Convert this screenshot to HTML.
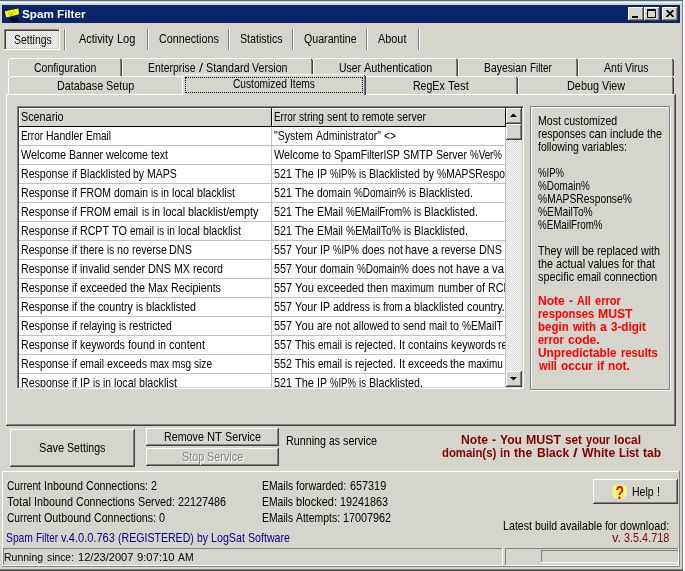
<!DOCTYPE html>
<html><head><meta charset="utf-8"><title>Spam Filter</title>
<style>
html,body{margin:0;padding:0}
body{width:685px;height:571px;position:relative;overflow:hidden;background:#d6d5cd;font-family:"Liberation Sans",sans-serif;font-size:13px;line-height:13px;color:#000}
i{position:absolute;display:block}
span{position:absolute;top:0;display:block;white-space:pre;transform-origin:0 0;height:13px;line-height:13px}
b{position:absolute;display:block;font-weight:normal;height:13px}
b.c{overflow:hidden}
#w{position:absolute;left:0;top:0;width:685px;height:571px;will-change:transform}
</style></head><body><div id="w">
<i style="left:0px;top:0px;width:683px;height:1px;background:#3a6ea5;"></i>
<i style="left:0px;top:2px;width:682px;height:1px;background:#ffffff;"></i>
<i style="left:682px;top:1px;width:1px;height:570px;background:#808080;"></i>
<i style="left:683px;top:0px;width:2px;height:571px;background:#ffffff;"></i>
<i style="left:0px;top:569px;width:683px;height:1px;background:#808080;"></i>
<i style="left:0px;top:570px;width:683px;height:1px;background:#404040;"></i>
<i style="left:2px;top:5px;width:678px;height:18px;background:#0a246a;"></i>
<svg style="position:absolute;left:2px;top:4px" width="24" height="20" viewBox="2 4 24 20">
<polygon points="4.8,11.2 18.4,8.4 19,14.3 6.3,17.4" fill="#ffff00"/>
<path d="M8 13.5 L10.5 12.2 L12 13.6 L14 11.4 L16 12.6 M9.5 15.2 L13.5 14.4" stroke="#9a9a00" stroke-width="0.9" fill="none"/>
<path d="M10.5 19 q1 -1.5 2 0 t2 0 t2 0 t2 0 M10.5 21 q1 -1.5 2 0 t2 0 t2 0 t2 0" stroke="#000" stroke-width="1.5" fill="none"/>
</svg>
<i style="left:628px;top:7px;width:16px;height:14px;background:#d6d5cd;"></i>
<i style="left:628px;top:7px;width:15px;height:1px;background:#ffffff;"></i>
<i style="left:628px;top:7px;width:1px;height:13px;background:#ffffff;"></i>
<i style="left:628px;top:20px;width:16px;height:1px;background:#404040;"></i>
<i style="left:643px;top:7px;width:1px;height:14px;background:#404040;"></i>
<i style="left:629px;top:19px;width:14px;height:1px;background:#808080;"></i>
<i style="left:642px;top:8px;width:1px;height:12px;background:#808080;"></i>
<i style="left:644px;top:7px;width:16px;height:14px;background:#d6d5cd;"></i>
<i style="left:644px;top:7px;width:15px;height:1px;background:#ffffff;"></i>
<i style="left:644px;top:7px;width:1px;height:13px;background:#ffffff;"></i>
<i style="left:644px;top:20px;width:16px;height:1px;background:#404040;"></i>
<i style="left:659px;top:7px;width:1px;height:14px;background:#404040;"></i>
<i style="left:645px;top:19px;width:14px;height:1px;background:#808080;"></i>
<i style="left:658px;top:8px;width:1px;height:12px;background:#808080;"></i>
<i style="left:662px;top:7px;width:16px;height:14px;background:#d6d5cd;"></i>
<i style="left:662px;top:7px;width:15px;height:1px;background:#ffffff;"></i>
<i style="left:662px;top:7px;width:1px;height:13px;background:#ffffff;"></i>
<i style="left:662px;top:20px;width:16px;height:1px;background:#404040;"></i>
<i style="left:677px;top:7px;width:1px;height:14px;background:#404040;"></i>
<i style="left:663px;top:19px;width:14px;height:1px;background:#808080;"></i>
<i style="left:676px;top:8px;width:1px;height:12px;background:#808080;"></i>
<i style="left:632px;top:16px;width:6px;height:2px;background:#000;"></i>
<i style="left:647px;top:9px;width:9px;height:2px;background:#000;"></i>
<i style="left:647px;top:9px;width:1px;height:9px;background:#000;"></i>
<i style="left:655px;top:9px;width:1px;height:9px;background:#000;"></i>
<i style="left:647px;top:17px;width:9px;height:1px;background:#000;"></i>
<svg style="position:absolute;left:666px;top:10px" width="8" height="7" viewBox="0 0 8 7"><path d="M0.5 0 L7.5 7 M7.5 0 L0.5 7" stroke="#000" stroke-width="1.7" fill="none"/></svg>
<i style="left:6px;top:31px;width:52px;height:17px;background:;background:repeating-conic-gradient(#ffffff 0% 25%, #d6d5cd 0% 50%) 0 0/2px 2px;"></i>
<i style="left:4px;top:29px;width:56px;height:1px;background:#808080;"></i>
<i style="left:4px;top:29px;width:1px;height:21px;background:#808080;"></i>
<i style="left:5px;top:30px;width:54px;height:1px;background:#404040;"></i>
<i style="left:5px;top:30px;width:1px;height:19px;background:#404040;"></i>
<i style="left:4px;top:49px;width:56px;height:1px;background:#ffffff;"></i>
<i style="left:59px;top:29px;width:1px;height:21px;background:#ffffff;"></i>
<i style="left:64px;top:29px;width:1px;height:21px;background:#808080;"></i>
<i style="left:65px;top:29px;width:1px;height:21px;background:#ffffff;"></i>
<i style="left:147px;top:29px;width:1px;height:21px;background:#808080;"></i>
<i style="left:148px;top:29px;width:1px;height:21px;background:#ffffff;"></i>
<i style="left:228px;top:29px;width:1px;height:21px;background:#808080;"></i>
<i style="left:229px;top:29px;width:1px;height:21px;background:#ffffff;"></i>
<i style="left:292px;top:29px;width:1px;height:21px;background:#808080;"></i>
<i style="left:293px;top:29px;width:1px;height:21px;background:#ffffff;"></i>
<i style="left:366px;top:29px;width:1px;height:21px;background:#808080;"></i>
<i style="left:367px;top:29px;width:1px;height:21px;background:#ffffff;"></i>
<i style="left:418px;top:29px;width:1px;height:21px;background:#808080;"></i>
<i style="left:419px;top:29px;width:1px;height:21px;background:#ffffff;"></i>
<i style="left:8px;top:60px;width:1px;height:16px;background:#ffffff;"></i>
<i style="left:9px;top:59px;width:1px;height:1px;background:#ffffff;"></i>
<i style="left:10px;top:58px;width:110px;height:1px;background:#ffffff;"></i>
<i style="left:120px;top:60px;width:1px;height:16px;background:#808080;"></i>
<i style="left:121px;top:60px;width:1px;height:16px;background:#404040;"></i>
<i style="left:120px;top:59px;width:1px;height:1px;background:#404040;"></i>
<i style="left:122px;top:60px;width:1px;height:16px;background:#ffffff;"></i>
<i style="left:123px;top:59px;width:1px;height:1px;background:#ffffff;"></i>
<i style="left:124px;top:58px;width:187px;height:1px;background:#ffffff;"></i>
<i style="left:311px;top:60px;width:1px;height:16px;background:#808080;"></i>
<i style="left:312px;top:60px;width:1px;height:16px;background:#404040;"></i>
<i style="left:311px;top:59px;width:1px;height:1px;background:#404040;"></i>
<i style="left:313px;top:60px;width:1px;height:16px;background:#ffffff;"></i>
<i style="left:314px;top:59px;width:1px;height:1px;background:#ffffff;"></i>
<i style="left:315px;top:58px;width:141px;height:1px;background:#ffffff;"></i>
<i style="left:456px;top:60px;width:1px;height:16px;background:#808080;"></i>
<i style="left:457px;top:60px;width:1px;height:16px;background:#404040;"></i>
<i style="left:456px;top:59px;width:1px;height:1px;background:#404040;"></i>
<i style="left:458px;top:60px;width:1px;height:16px;background:#ffffff;"></i>
<i style="left:459px;top:59px;width:1px;height:1px;background:#ffffff;"></i>
<i style="left:460px;top:58px;width:116px;height:1px;background:#ffffff;"></i>
<i style="left:576px;top:60px;width:1px;height:16px;background:#808080;"></i>
<i style="left:577px;top:60px;width:1px;height:16px;background:#404040;"></i>
<i style="left:576px;top:59px;width:1px;height:1px;background:#404040;"></i>
<i style="left:578px;top:60px;width:1px;height:16px;background:#ffffff;"></i>
<i style="left:579px;top:59px;width:1px;height:1px;background:#ffffff;"></i>
<i style="left:580px;top:58px;width:92px;height:1px;background:#ffffff;"></i>
<i style="left:672px;top:60px;width:1px;height:16px;background:#808080;"></i>
<i style="left:673px;top:60px;width:1px;height:16px;background:#404040;"></i>
<i style="left:672px;top:59px;width:1px;height:1px;background:#404040;"></i>
<i style="left:8px;top:78px;width:1px;height:16px;background:#ffffff;"></i>
<i style="left:9px;top:77px;width:1px;height:1px;background:#ffffff;"></i>
<i style="left:10px;top:76px;width:172px;height:1px;background:#ffffff;"></i>
<i style="left:366px;top:76px;width:150px;height:1px;background:#ffffff;"></i>
<i style="left:516px;top:78px;width:1px;height:16px;background:#808080;"></i>
<i style="left:517px;top:78px;width:1px;height:16px;background:#404040;"></i>
<i style="left:516px;top:77px;width:1px;height:1px;background:#404040;"></i>
<i style="left:518px;top:78px;width:1px;height:16px;background:#ffffff;"></i>
<i style="left:519px;top:77px;width:1px;height:1px;background:#ffffff;"></i>
<i style="left:520px;top:76px;width:152px;height:1px;background:#ffffff;"></i>
<i style="left:672px;top:78px;width:1px;height:16px;background:#808080;"></i>
<i style="left:673px;top:78px;width:1px;height:16px;background:#404040;"></i>
<i style="left:672px;top:77px;width:1px;height:1px;background:#404040;"></i>
<i style="left:6px;top:94px;width:669px;height:1px;background:#ffffff;"></i>
<i style="left:6px;top:94px;width:1px;height:331px;background:#ffffff;"></i>
<i style="left:674px;top:95px;width:1px;height:330px;background:#808080;"></i>
<i style="left:675px;top:94px;width:1px;height:332px;background:#404040;"></i>
<i style="left:7px;top:424px;width:668px;height:1px;background:#808080;"></i>
<i style="left:6px;top:425px;width:670px;height:1px;background:#404040;"></i>
<i style="left:182px;top:74px;width:184px;height:21px;background:#d6d5cd;"></i>
<i style="left:182px;top:76px;width:1px;height:19px;background:#ffffff;"></i>
<i style="left:183px;top:75px;width:1px;height:1px;background:#ffffff;"></i>
<i style="left:184px;top:74px;width:180px;height:1px;background:#ffffff;"></i>
<i style="left:364px;top:76px;width:1px;height:19px;background:#808080;"></i>
<i style="left:365px;top:76px;width:1px;height:19px;background:#404040;"></i>
<i style="left:364px;top:75px;width:1px;height:1px;background:#404040;"></i>
<i style="left:185px;top:77px;width:176px;height:14px;border:1px dotted #000;background:none"></i>
<i style="left:17px;top:106px;width:507px;height:1px;background:#808080;"></i>
<i style="left:17px;top:106px;width:1px;height:283px;background:#808080;"></i>
<i style="left:18px;top:107px;width:505px;height:1px;background:#404040;"></i>
<i style="left:18px;top:107px;width:1px;height:281px;background:#404040;"></i>
<i style="left:17px;top:388px;width:507px;height:1px;background:#ffffff;"></i>
<i style="left:523px;top:106px;width:1px;height:283px;background:#ffffff;"></i>
<i style="left:19px;top:127px;width:487px;height:260px;background:#ffffff;"></i>
<i style="left:19px;top:108px;width:487px;height:1px;background:#ffffff;"></i>
<i style="left:19px;top:108px;width:1px;height:18px;background:#ffffff;"></i>
<i style="left:272px;top:108px;width:1px;height:18px;background:#ffffff;"></i>
<i style="left:271px;top:108px;width:1px;height:19px;background:#000;"></i>
<i style="left:505px;top:108px;width:1px;height:19px;background:#000;"></i>
<i style="left:19px;top:126px;width:487px;height:1px;background:#000;"></i>
<i style="left:19px;top:145px;width:487px;height:1px;background:#c0c0c0;"></i>
<i style="left:19px;top:164px;width:487px;height:1px;background:#c0c0c0;"></i>
<i style="left:19px;top:183px;width:487px;height:1px;background:#c0c0c0;"></i>
<i style="left:19px;top:202px;width:487px;height:1px;background:#c0c0c0;"></i>
<i style="left:19px;top:221px;width:487px;height:1px;background:#c0c0c0;"></i>
<i style="left:19px;top:240px;width:487px;height:1px;background:#c0c0c0;"></i>
<i style="left:19px;top:259px;width:487px;height:1px;background:#c0c0c0;"></i>
<i style="left:19px;top:278px;width:487px;height:1px;background:#c0c0c0;"></i>
<i style="left:19px;top:297px;width:487px;height:1px;background:#c0c0c0;"></i>
<i style="left:19px;top:316px;width:487px;height:1px;background:#c0c0c0;"></i>
<i style="left:19px;top:335px;width:487px;height:1px;background:#c0c0c0;"></i>
<i style="left:19px;top:354px;width:487px;height:1px;background:#c0c0c0;"></i>
<i style="left:19px;top:373px;width:487px;height:1px;background:#c0c0c0;"></i>
<i style="left:271px;top:127px;width:1px;height:260px;background:#c0c0c0;"></i>
<i style="left:505px;top:127px;width:1px;height:260px;background:#c0c0c0;"></i>
<i style="left:506px;top:108px;width:16px;height:279px;background:;background:repeating-conic-gradient(#ffffff 0% 25%, #d6d5cd 0% 50%) 0 0/2px 2px;"></i>
<i style="left:506px;top:108px;width:16px;height:16px;background:#d6d5cd;"></i>
<i style="left:506px;top:108px;width:15px;height:1px;background:#ffffff;"></i>
<i style="left:506px;top:108px;width:1px;height:15px;background:#ffffff;"></i>
<i style="left:506px;top:123px;width:16px;height:1px;background:#404040;"></i>
<i style="left:521px;top:108px;width:1px;height:16px;background:#404040;"></i>
<i style="left:507px;top:122px;width:14px;height:1px;background:#808080;"></i>
<i style="left:520px;top:109px;width:1px;height:14px;background:#808080;"></i>
<i style="left:506px;top:124px;width:16px;height:16px;background:#d6d5cd;"></i>
<i style="left:506px;top:124px;width:15px;height:1px;background:#ffffff;"></i>
<i style="left:506px;top:124px;width:1px;height:15px;background:#ffffff;"></i>
<i style="left:506px;top:139px;width:16px;height:1px;background:#404040;"></i>
<i style="left:521px;top:124px;width:1px;height:16px;background:#404040;"></i>
<i style="left:507px;top:138px;width:14px;height:1px;background:#808080;"></i>
<i style="left:520px;top:125px;width:1px;height:14px;background:#808080;"></i>
<i style="left:506px;top:371px;width:16px;height:16px;background:#d6d5cd;"></i>
<i style="left:506px;top:371px;width:15px;height:1px;background:#ffffff;"></i>
<i style="left:506px;top:371px;width:1px;height:15px;background:#ffffff;"></i>
<i style="left:506px;top:386px;width:16px;height:1px;background:#404040;"></i>
<i style="left:521px;top:371px;width:1px;height:16px;background:#404040;"></i>
<i style="left:507px;top:385px;width:14px;height:1px;background:#808080;"></i>
<i style="left:520px;top:372px;width:1px;height:14px;background:#808080;"></i>
<svg style="position:absolute;left:510px;top:113px" width="7" height="4" viewBox="0 0 7 4"><polygon points="0,4 3.5,0.5 7,4" fill="#000"/></svg>
<svg style="position:absolute;left:510px;top:377px" width="7" height="4" viewBox="0 0 7 4"><polygon points="0,0 7,0 3.5,3.5" fill="#000"/></svg>
<i style="left:530px;top:390px;width:141px;height:1px;background:#ffffff;"></i>
<i style="left:670px;top:106px;width:1px;height:285px;background:#ffffff;"></i>
<i style="left:530px;top:106px;width:140px;height:1px;background:#808080;"></i>
<i style="left:530px;top:106px;width:1px;height:284px;background:#808080;"></i>
<i style="left:531px;top:107px;width:138px;height:1px;background:#ffffff;"></i>
<i style="left:531px;top:107px;width:1px;height:282px;background:#ffffff;"></i>
<i style="left:531px;top:389px;width:139px;height:1px;background:#808080;"></i>
<i style="left:669px;top:107px;width:1px;height:283px;background:#808080;"></i>
<i style="left:10px;top:429px;width:125px;height:38px;background:#d6d5cd;"></i>
<i style="left:10px;top:429px;width:124px;height:1px;background:#ffffff;"></i>
<i style="left:10px;top:429px;width:1px;height:37px;background:#ffffff;"></i>
<i style="left:10px;top:466px;width:125px;height:1px;background:#404040;"></i>
<i style="left:134px;top:429px;width:1px;height:38px;background:#404040;"></i>
<i style="left:11px;top:465px;width:123px;height:1px;background:#808080;"></i>
<i style="left:133px;top:430px;width:1px;height:36px;background:#808080;"></i>
<i style="left:146px;top:428px;width:133px;height:18px;background:#d6d5cd;"></i>
<i style="left:146px;top:428px;width:132px;height:1px;background:#ffffff;"></i>
<i style="left:146px;top:428px;width:1px;height:17px;background:#ffffff;"></i>
<i style="left:146px;top:445px;width:133px;height:1px;background:#404040;"></i>
<i style="left:278px;top:428px;width:1px;height:18px;background:#404040;"></i>
<i style="left:147px;top:444px;width:131px;height:1px;background:#808080;"></i>
<i style="left:277px;top:429px;width:1px;height:16px;background:#808080;"></i>
<i style="left:146px;top:448px;width:133px;height:18px;background:#d6d5cd;"></i>
<i style="left:146px;top:448px;width:132px;height:1px;background:#ffffff;"></i>
<i style="left:146px;top:448px;width:1px;height:17px;background:#ffffff;"></i>
<i style="left:146px;top:465px;width:133px;height:1px;background:#404040;"></i>
<i style="left:278px;top:448px;width:1px;height:18px;background:#404040;"></i>
<i style="left:147px;top:464px;width:131px;height:1px;background:#808080;"></i>
<i style="left:277px;top:449px;width:1px;height:16px;background:#808080;"></i>
<i style="left:2px;top:471px;width:678px;height:1px;background:#ffffff;"></i>
<i style="left:2px;top:471px;width:1px;height:95px;background:#ffffff;"></i>
<i style="left:679px;top:471px;width:1px;height:96px;background:#808080;"></i>
<i style="left:2px;top:566px;width:678px;height:1px;background:#808080;"></i>
<i style="left:3px;top:548px;width:500px;height:1px;background:#808080;"></i>
<i style="left:3px;top:548px;width:1px;height:18px;background:#808080;"></i>
<i style="left:3px;top:565px;width:500px;height:1px;background:#ffffff;"></i>
<i style="left:502px;top:548px;width:1px;height:18px;background:#ffffff;"></i>
<i style="left:505px;top:548px;width:174px;height:1px;background:#808080;"></i>
<i style="left:505px;top:548px;width:1px;height:18px;background:#808080;"></i>
<i style="left:505px;top:565px;width:174px;height:1px;background:#ffffff;"></i>
<i style="left:678px;top:548px;width:1px;height:18px;background:#ffffff;"></i>
<i style="left:541px;top:550px;width:138px;height:1px;background:#808080;"></i>
<i style="left:541px;top:550px;width:1px;height:13px;background:#808080;"></i>
<i style="left:541px;top:562px;width:138px;height:1px;background:#ffffff;"></i>
<i style="left:678px;top:550px;width:1px;height:13px;background:#ffffff;"></i>
<i style="left:593px;top:479px;width:85px;height:25px;background:#d6d5cd;"></i>
<i style="left:593px;top:479px;width:84px;height:1px;background:#ffffff;"></i>
<i style="left:593px;top:479px;width:1px;height:24px;background:#ffffff;"></i>
<i style="left:593px;top:503px;width:85px;height:1px;background:#404040;"></i>
<i style="left:677px;top:479px;width:1px;height:25px;background:#404040;"></i>
<i style="left:594px;top:502px;width:83px;height:1px;background:#808080;"></i>
<i style="left:676px;top:480px;width:1px;height:23px;background:#808080;"></i>
<svg style="position:absolute;left:611px;top:483px" width="17" height="17" viewBox="0 0 17 17">
<defs><pattern id="yd" width="2" height="2" patternUnits="userSpaceOnUse"><rect width="2" height="2" fill="#ffff00"/><rect width="1" height="1" fill="#fff"/><rect x="1" y="1" width="1" height="1" fill="#fff"/></pattern></defs>
<circle cx="8.5" cy="8.5" r="7.6" fill="url(#yd)"/>
<text x="8.7" y="16" text-anchor="middle" transform="translate(8.7,0) scale(0.78,1) translate(-8.7,0)" font-family="Liberation Sans, sans-serif" font-weight="bold" font-size="18" fill="#ff0000">?</text></svg>
<b class="l" style="left:20px;top:7px;color:#fff;"><span style="left:1.62px;transform:scaleX(1.0060);font-weight:bold;font-size:11.6px;">Spam Filter</span></b>
<b class="l" style="left:13px;top:33px;"><span style="left:1.10px;transform:scaleX(0.8026);">Settings</span></b>
<b class="l" style="left:78px;top:32px;"><span style="left:1.10px;transform:scaleX(0.8382);">Activity</span> <span style="left:38.66px;transform:scaleX(0.8423);">Log</span></b>
<b class="l" style="left:158px;top:32px;"><span style="left:1.10px;transform:scaleX(0.8275);">Connections</span></b>
<b class="l" style="left:239px;top:32px;"><span style="left:1.10px;transform:scaleX(0.8171);">Statistics</span></b>
<b class="l" style="left:303px;top:32px;"><span style="left:1.10px;transform:scaleX(0.8178);">Quarantine</span></b>
<b class="l" style="left:377px;top:32px;"><span style="left:1.10px;transform:scaleX(0.8366);">About</span></b>
<b class="l" style="left:33px;top:61px;"><span style="left:1.10px;transform:scaleX(0.8057);">Configuration</span></b>
<b class="l" style="left:147px;top:61px;"><span style="left:1.10px;transform:scaleX(0.8036);">Enterprise</span> <span style="left:51.75px;transform:scaleX(1.1219);">/</span> <span style="left:58.84px;transform:scaleX(0.8256);">Standard</span> <span style="left:105.44px;transform:scaleX(0.8177);">Version</span></b>
<b class="l" style="left:338px;top:61px;"><span style="left:1.10px;transform:scaleX(0.8041);">User</span> <span style="left:26.18px;transform:scaleX(0.8280);">Authentication</span></b>
<b class="l" style="left:483px;top:61px;"><span style="left:1.10px;transform:scaleX(0.7981);">Bayesian</span> <span style="left:46.76px;transform:scaleX(0.7560);">Filter</span></b>
<b class="l" style="left:603px;top:61px;"><span style="left:1.10px;transform:scaleX(0.8156);">Anti</span> <span style="left:22.42px;transform:scaleX(0.7945);">Virus</span></b>
<b class="l" style="left:56px;top:79px;"><span style="left:1.10px;transform:scaleX(0.8298);">Database</span> <span style="left:50.29px;transform:scaleX(0.8274);">Setup</span></b>
<b class="l" style="left:232px;top:77px;"><span style="left:1.10px;transform:scaleX(0.7839);">Customized</span> <span style="left:57.89px;transform:scaleX(0.7837);">Items</span></b>
<b class="l" style="left:412px;top:79px;"><span style="left:1.10px;transform:scaleX(0.8113);">RegEx</span> <span style="left:35.73px;transform:scaleX(0.8714);">Test</span></b>
<b class="l" style="left:566px;top:79px;"><span style="left:1.10px;transform:scaleX(0.8353);">Debug</span> <span style="left:36.10px;transform:scaleX(0.8231);">View</span></b>
<b class="l" style="left:20px;top:110px;"><span style="left:1.10px;transform:scaleX(0.8309);">Scenario</span></b>
<b class="l" style="left:273px;top:110px;"><span style="left:1.10px;transform:scaleX(0.7601);">Error</span> <span style="left:26.05px;transform:scaleX(0.7849);">string</span> <span style="left:54.00px;transform:scaleX(0.8123);">sent</span> <span style="left:76.95px;transform:scaleX(0.8285);">to</span> <span style="left:88.93px;transform:scaleX(0.7893);">remote</span> <span style="left:123.86px;transform:scaleX(0.8013);">server</span></b>
<b class="c" style="left:19px;top:129px;width:252px;height:16px"><span style="left:2.10px;transform:scaleX(0.7590);">Error</span> <span style="left:27.02px;transform:scaleX(0.8100);">Handler</span> <span style="left:66.88px;transform:scaleX(0.7665);">Email</span></b>
<b class="c" style="left:272px;top:129px;width:233px;height:16px"><span style="left:2.10px;transform:scaleX(0.8112);">&quot;System</span> <span style="left:44.00px;transform:scaleX(0.7986);">Administrator&quot;</span> <span style="left:111.83px;transform:scaleX(0.7884);">&lt;&gt;</span></b>
<b class="c" style="left:19px;top:148px;width:252px;height:16px"><span style="left:2.10px;transform:scaleX(0.8342);">Welcome</span> <span style="left:50.10px;transform:scaleX(0.8111);">Banner</span> <span style="left:87.10px;transform:scaleX(0.8188);">welcome</span> <span style="left:132.10px;transform:scaleX(0.8113);">text</span></b>
<b class="c" style="left:272px;top:148px;width:233px;height:16px"><span style="left:2.10px;transform:scaleX(0.8335);">Welcome</span> <span style="left:50.06px;transform:scaleX(0.8294);">to</span> <span style="left:62.05px;transform:scaleX(0.7869);">SpamFilterISP</span> <span style="left:130.99px;transform:scaleX(0.8300);">SMTP</span> <span style="left:163.96px;transform:scaleX(0.8089);">Server</span> <span style="left:197.93px;transform:scaleX(0.7500);">%Ver%</span></b>
<b class="c" style="left:19px;top:167px;width:252px;height:16px"><span style="left:2.10px;transform:scaleX(0.8127);">Response</span> <span style="left:52.65px;transform:scaleX(0.7624);">if</span> <span style="left:60.57px;transform:scaleX(0.8134);">Blacklisted</span> <span style="left:114.09px;transform:scaleX(0.7940);">by</span> <span style="left:127.97px;transform:scaleX(0.8070);">MAPS</span></b>
<b class="c" style="left:272px;top:167px;width:233px;height:16px"><span style="left:2.10px;transform:scaleX(0.8269);">521</span> <span style="left:23.03px;transform:scaleX(0.8452);">The</span> <span style="left:44.95px;transform:scaleX(0.8113);">IP</span> <span style="left:57.90px;transform:scaleX(0.7318);">%IP%</span> <span style="left:86.80px;transform:scaleX(0.7430);">is</span> <span style="left:96.76px;transform:scaleX(0.8179);">Blacklisted</span> <span style="left:150.57px;transform:scaleX(0.7983);">by</span> <span style="left:164.52px;transform:scaleX(0.7905);">%MAPSResponse%</span></b>
<b class="c" style="left:19px;top:186px;width:252px;height:16px"><span style="left:2.10px;transform:scaleX(0.8196);">Response</span> <span style="left:53.08px;transform:scaleX(0.7689);">if</span> <span style="left:61.07px;transform:scaleX(0.8097);">FROM</span> <span style="left:95.06px;transform:scaleX(0.7971);">domain</span> <span style="left:132.04px;transform:scaleX(0.7453);">is</span> <span style="left:142.03px;transform:scaleX(0.7903);">in</span> <span style="left:153.03px;transform:scaleX(0.8225);">local</span> <span style="left:178.02px;transform:scaleX(0.8215);">blacklist</span></b>
<b class="c" style="left:272px;top:186px;width:233px;height:16px"><span style="left:2.10px;transform:scaleX(0.8286);">521</span> <span style="left:23.07px;transform:scaleX(0.8469);">The</span> <span style="left:45.04px;transform:scaleX(0.7962);">domain</span> <span style="left:81.98px;transform:scaleX(0.7645);">%Domain%</span> <span style="left:136.90px;transform:scaleX(0.7445);">is</span> <span style="left:146.88px;transform:scaleX(0.8201);">Blacklisted.</span></b>
<b class="c" style="left:19px;top:205px;width:252px;height:16px"><span style="left:2.10px;transform:scaleX(0.8235);">Response</span> <span style="left:53.32px;transform:scaleX(0.7725);">if</span> <span style="left:61.35px;transform:scaleX(0.8135);">FROM</span> <span style="left:95.49px;transform:scaleX(0.7758);">email</span> <span style="left:122.61px;transform:scaleX(0.7488);">is</span> <span style="left:132.65px;transform:scaleX(0.7940);">in</span> <span style="left:143.70px;transform:scaleX(0.8263);">local</span> <span style="left:168.80px;transform:scaleX(0.8246);">blacklist/empty</span></b>
<b class="c" style="left:272px;top:205px;width:233px;height:16px"><span style="left:2.10px;transform:scaleX(0.8295);">521</span> <span style="left:23.09px;transform:scaleX(0.8478);">The</span> <span style="left:45.08px;transform:scaleX(0.7995);">EMail</span> <span style="left:74.06px;transform:scaleX(0.7559);">%EMailFrom%</span> <span style="left:142.03px;transform:scaleX(0.7453);">is</span> <span style="left:152.03px;transform:scaleX(0.8209);">Blacklisted.</span></b>
<b class="c" style="left:19px;top:224px;width:252px;height:16px"><span style="left:2.10px;transform:scaleX(0.8189);">Response</span> <span style="left:53.03px;transform:scaleX(0.7682);">if</span> <span style="left:61.02px;transform:scaleX(0.8184);">RCPT</span> <span style="left:92.98px;transform:scaleX(0.8407);">TO</span> <span style="left:110.95px;transform:scaleX(0.7715);">email</span> <span style="left:137.91px;transform:scaleX(0.7446);">is</span> <span style="left:147.90px;transform:scaleX(0.7896);">in</span> <span style="left:158.89px;transform:scaleX(0.8217);">local</span> <span style="left:183.85px;transform:scaleX(0.8207);">blacklist</span></b>
<b class="c" style="left:272px;top:224px;width:233px;height:16px"><span style="left:2.10px;transform:scaleX(0.8273);">521</span> <span style="left:23.04px;transform:scaleX(0.8456);">The</span> <span style="left:44.97px;transform:scaleX(0.7974);">EMail</span> <span style="left:73.88px;transform:scaleX(0.7906);">%EMailTo%</span> <span style="left:131.70px;transform:scaleX(0.7433);">is</span> <span style="left:141.67px;transform:scaleX(0.8188);">Blacklisted.</span></b>
<b class="c" style="left:19px;top:243px;width:252px;height:16px"><span style="left:2.10px;transform:scaleX(0.8157);">Response</span> <span style="left:52.83px;transform:scaleX(0.7652);">if</span> <span style="left:60.79px;transform:scaleX(0.8057);">there</span> <span style="left:87.65px;transform:scaleX(0.7417);">is</span> <span style="left:97.60px;transform:scaleX(0.8255);">no</span> <span style="left:112.52px;transform:scaleX(0.8032);">reverse</span> <span style="left:150.32px;transform:scaleX(0.8336);">DNS</span></b>
<b class="c" style="left:272px;top:243px;width:233px;height:16px"><span style="left:2.10px;transform:scaleX(0.8255);">557</span> <span style="left:22.99px;transform:scaleX(0.8332);">Your</span> <span style="left:47.86px;transform:scaleX(0.8099);">IP</span> <span style="left:60.79px;transform:scaleX(0.7306);">%IP%</span> <span style="left:89.64px;transform:scaleX(0.8116);">does</span> <span style="left:115.50px;transform:scaleX(0.8257);">not</span> <span style="left:133.41px;transform:scaleX(0.8469);">have</span> <span style="left:160.27px;transform:scaleX(0.8255);">a</span> <span style="left:169.22px;transform:scaleX(0.8032);">reverse</span> <span style="left:207.02px;transform:scaleX(0.8336);">DNS</span></b>
<b class="c" style="left:19px;top:262px;width:252px;height:16px"><span style="left:2.10px;transform:scaleX(0.8184);">Response</span> <span style="left:53.00px;transform:scaleX(0.7677);">if</span> <span style="left:60.98px;transform:scaleX(0.8124);">invalid</span> <span style="left:93.92px;transform:scaleX(0.8035);">sender</span> <span style="left:128.85px;transform:scaleX(0.8363);">DNS</span> <span style="left:154.80px;transform:scaleX(0.8189);">MX</span> <span style="left:173.76px;transform:scaleX(0.8125);">record</span></b>
<b class="c" style="left:272px;top:262px;width:233px;height:16px"><span style="left:2.10px;transform:scaleX(0.8287);">557</span> <span style="left:23.07px;transform:scaleX(0.8364);">Your</span> <span style="left:48.04px;transform:scaleX(0.7963);">domain</span> <span style="left:84.98px;transform:scaleX(0.7646);">%Domain%</span> <span style="left:139.91px;transform:scaleX(0.8148);">does</span> <span style="left:165.87px;transform:scaleX(0.8289);">not</span> <span style="left:183.85px;transform:scaleX(0.8502);">have</span> <span style="left:210.81px;transform:scaleX(0.8287);">a</span> <span style="left:219.80px;transform:scaleX(0.8728);">va</span></b>
<b class="c" style="left:19px;top:281px;width:252px;height:16px"><span style="left:2.10px;transform:scaleX(0.8192);">Response</span> <span style="left:53.05px;transform:scaleX(0.7685);">if</span> <span style="left:61.04px;transform:scaleX(0.8328);">exceeded</span> <span style="left:110.99px;transform:scaleX(0.8292);">the</span> <span style="left:128.97px;transform:scaleX(0.8135);">Max</span> <span style="left:151.95px;transform:scaleX(0.8229);">Recipients</span></b>
<b class="c" style="left:272px;top:281px;width:233px;height:16px"><span style="left:2.10px;transform:scaleX(0.8326);">557</span> <span style="left:23.17px;transform:scaleX(0.8690);">You</span> <span style="left:45.24px;transform:scaleX(0.8364);">exceeded</span> <span style="left:95.41px;transform:scaleX(0.8327);">then</span> <span style="left:119.49px;transform:scaleX(0.7658);">maximum</span> <span style="left:165.64px;transform:scaleX(0.7967);">number</span> <span style="left:203.77px;transform:scaleX(0.8329);">of</span> <span style="left:215.81px;transform:scaleX(0.8222);">RCPT</span> <span style="left:247.92px;transform:scaleX(0.8447);">TO</span></b>
<b class="c" style="left:19px;top:300px;width:252px;height:16px"><span style="left:2.10px;transform:scaleX(0.8181);">Response</span> <span style="left:52.98px;transform:scaleX(0.7675);">if</span> <span style="left:60.97px;transform:scaleX(0.8281);">the</span> <span style="left:78.92px;transform:scaleX(0.8191);">country</span> <span style="left:116.84px;transform:scaleX(0.7439);">is</span> <span style="left:126.81px;transform:scaleX(0.8219);">blacklisted</span></b>
<b class="c" style="left:272px;top:300px;width:233px;height:16px"><span style="left:2.10px;transform:scaleX(0.8259);">557</span> <span style="left:23.00px;transform:scaleX(0.8336);">Your</span> <span style="left:47.88px;transform:scaleX(0.8103);">IP</span> <span style="left:60.82px;transform:scaleX(0.7962);">address</span> <span style="left:100.63px;transform:scaleX(0.7421);">is</span> <span style="left:110.58px;transform:scaleX(0.7656);">from</span> <span style="left:133.47px;transform:scaleX(0.8259);">a</span> <span style="left:142.43px;transform:scaleX(0.8199);">blacklisted</span> <span style="left:195.18px;transform:scaleX(0.8353);">country.</span></b>
<b class="c" style="left:19px;top:319px;width:252px;height:16px"><span style="left:2.10px;transform:scaleX(0.8167);">Response</span> <span style="left:52.90px;transform:scaleX(0.7662);">if</span> <span style="left:60.87px;transform:scaleX(0.7876);">relaying</span> <span style="left:99.71px;transform:scaleX(0.7427);">is</span> <span style="left:109.67px;transform:scaleX(0.8011);">restricted</span></b>
<b class="c" style="left:272px;top:319px;width:233px;height:16px"><span style="left:2.10px;transform:scaleX(0.8241);">557</span> <span style="left:22.95px;transform:scaleX(0.8601);">You</span> <span style="left:44.80px;transform:scaleX(0.7928);">are</span> <span style="left:62.68px;transform:scaleX(0.8242);">not</span> <span style="left:80.55px;transform:scaleX(0.8109);">allowed</span> <span style="left:119.28px;transform:scaleX(0.8243);">to</span> <span style="left:131.20px;transform:scaleX(0.8102);">send</span> <span style="left:157.01px;transform:scaleX(0.7499);">mail</span> <span style="left:177.87px;transform:scaleX(0.8243);">to</span> <span style="left:189.79px;transform:scaleX(0.7829);">%EMailT</span></b>
<b class="c" style="left:19px;top:338px;width:252px;height:16px"><span style="left:2.10px;transform:scaleX(0.8186);">Response</span> <span style="left:53.02px;transform:scaleX(0.7680);">if</span> <span style="left:61.00px;transform:scaleX(0.8182);">keywords</span> <span style="left:108.93px;transform:scaleX(0.8286);">found</span> <span style="left:138.88px;transform:scaleX(0.7894);">in</span> <span style="left:149.86px;transform:scaleX(0.8428);">content</span></b>
<b class="c" style="left:272px;top:338px;width:233px;height:16px"><span style="left:2.10px;transform:scaleX(0.8273);">557</span> <span style="left:23.03px;transform:scaleX(0.8118);">This</span> <span style="left:45.96px;transform:scaleX(0.7701);">email</span> <span style="left:72.88px;transform:scaleX(0.7433);">is</span> <span style="left:82.84px;transform:scaleX(0.8197);">rejected.</span> <span style="left:126.71px;transform:scaleX(0.8280);">It</span> <span style="left:135.68px;transform:scaleX(0.8235);">contains</span> <span style="left:178.54px;transform:scaleX(0.8170);">keywords</span> <span style="left:226.39px;transform:scaleX(0.8190);">rejected</span></b>
<b class="c" style="left:19px;top:357px;width:252px;height:16px"><span style="left:2.10px;transform:scaleX(0.8204);">Response</span> <span style="left:53.13px;transform:scaleX(0.7696);">if</span> <span style="left:61.13px;transform:scaleX(0.7730);">email</span> <span style="left:88.15px;transform:scaleX(0.8265);">exceeds</span> <span style="left:131.17px;transform:scaleX(0.7740);">max</span> <span style="left:153.18px;transform:scaleX(0.7740);">msg</span> <span style="left:175.19px;transform:scaleX(0.7790);">size</span></b>
<b class="c" style="left:272px;top:357px;width:233px;height:16px"><span style="left:2.10px;transform:scaleX(0.8270);">552</span> <span style="left:23.03px;transform:scaleX(0.8115);">This</span> <span style="left:45.95px;transform:scaleX(0.7699);">email</span> <span style="left:72.85px;transform:scaleX(0.7430);">is</span> <span style="left:82.82px;transform:scaleX(0.8194);">rejected.</span> <span style="left:126.67px;transform:scaleX(0.8277);">It</span> <span style="left:135.63px;transform:scaleX(0.8232);">exceeds</span> <span style="left:178.48px;transform:scaleX(0.8271);">the</span> <span style="left:196.42px;transform:scaleX(0.7664);">maximu</span></b>
<b class="c" style="left:19px;top:376px;width:252px;height:11px"><span style="left:2.10px;transform:scaleX(0.8210);">Response</span> <span style="left:53.17px;transform:scaleX(0.7702);">if</span> <span style="left:61.18px;transform:scaleX(0.8152);">IP</span> <span style="left:74.19px;transform:scaleX(0.7466);">is</span> <span style="left:84.21px;transform:scaleX(0.7917);">in</span> <span style="left:95.22px;transform:scaleX(0.8239);">local</span> <span style="left:120.25px;transform:scaleX(0.8229);">blacklist</span></b>
<b class="c" style="left:272px;top:376px;width:233px;height:11px"><span style="left:2.10px;transform:scaleX(0.8282);">521</span> <span style="left:23.06px;transform:scaleX(0.8465);">The</span> <span style="left:45.01px;transform:scaleX(0.8125);">IP</span> <span style="left:57.99px;transform:scaleX(0.7330);">%IP%</span> <span style="left:86.93px;transform:scaleX(0.7441);">is</span> <span style="left:96.91px;transform:scaleX(0.8197);">Blacklisted.</span></b>
<b class="l" style="left:537px;top:114px;"><span style="left:1.10px;transform:scaleX(0.8185);">Most</span> <span style="left:27.17px;transform:scaleX(0.8081);">customized</span></b>
<b class="l" style="left:537px;top:127px;"><span style="left:1.10px;transform:scaleX(0.8003);">responses</span> <span style="left:52.10px;transform:scaleX(0.8588);">can</span> <span style="left:73.10px;transform:scaleX(0.8253);">include</span> <span style="left:110.10px;transform:scaleX(0.8300);">the</span></b>
<b class="l" style="left:537px;top:140px;"><span style="left:1.10px;transform:scaleX(0.8078);">following</span> <span style="left:44.95px;transform:scaleX(0.8061);">variables:</span></b>
<b class="l" style="left:537px;top:166px;"><span style="left:1.10px;transform:scaleX(0.7344);">%IP%</span></b>
<b class="l" style="left:537px;top:179px;"><span style="left:1.10px;transform:scaleX(0.7613);">%Domain%</span></b>
<b class="l" style="left:537px;top:192px;"><span style="left:1.10px;transform:scaleX(0.7924);">%MAPSResponse%</span></b>
<b class="l" style="left:537px;top:205px;"><span style="left:1.10px;transform:scaleX(0.7887);">%EMailTo%</span></b>
<b class="l" style="left:537px;top:218px;"><span style="left:1.10px;transform:scaleX(0.7504);">%EMailFrom%</span></b>
<b class="l" style="left:537px;top:244px;"><span style="left:1.10px;transform:scaleX(0.8304);">They</span> <span style="left:28.10px;transform:scaleX(0.7755);">will</span> <span style="left:45.10px;transform:scaleX(0.8299);">be</span> <span style="left:60.10px;transform:scaleX(0.8222);">replaced</span> <span style="left:104.10px;transform:scaleX(0.8219);">with</span></b>
<b class="l" style="left:537px;top:257px;"><span style="left:1.10px;transform:scaleX(0.8322);">the</span> <span style="left:19.15px;transform:scaleX(0.8381);">actual</span> <span style="left:51.23px;transform:scaleX(0.8271);">values</span> <span style="left:85.32px;transform:scaleX(0.7930);">for</span> <span style="left:100.35px;transform:scaleX(0.8322);">that</span></b>
<b class="l" style="left:537px;top:270px;"><span style="left:1.10px;transform:scaleX(0.8319);">specific</span> <span style="left:40.17px;transform:scaleX(0.7739);">email</span> <span style="left:67.21px;transform:scaleX(0.8443);">connection</span></b>
<b class="l" style="left:537px;top:294px;color:#ff0000;"><span style="left:1.10px;transform:scaleX(0.9256);font-weight:bold;">Note</span> <span style="left:31.80px;transform:scaleX(0.9151);font-weight:bold;">-</span> <span style="left:39.72px;transform:scaleX(0.8347);font-weight:bold;">All</span> <span style="left:57.55px;transform:scaleX(0.8485);font-weight:bold;">error</span></b>
<b class="l" style="left:537px;top:307px;color:#ff0000;"><span style="left:1.10px;transform:scaleX(0.8646);font-weight:bold;">responses</span> <span style="left:61.27px;transform:scaleX(0.9375);font-weight:bold;">MUST</span></b>
<b class="l" style="left:537px;top:320px;color:#ff0000;"><span style="left:1.10px;transform:scaleX(0.8893);font-weight:bold;">begin</span> <span style="left:35.91px;transform:scaleX(0.8799);font-weight:bold;">with</span> <span style="left:62.76px;transform:scaleX(0.9628);font-weight:bold;">a</span> <span style="left:73.69px;transform:scaleX(0.8926);font-weight:bold;">3-digit</span></b>
<b class="l" style="left:537px;top:333px;color:#ff0000;"><span style="left:1.10px;transform:scaleX(0.8471);font-weight:bold;">error</span> <span style="left:30.76px;transform:scaleX(0.9318);font-weight:bold;">code.</span></b>
<b class="l" style="left:537px;top:346px;color:#ff0000;"><span style="left:1.10px;transform:scaleX(0.9053);font-weight:bold;">Unpredictable</span> <span style="left:83.55px;transform:scaleX(0.8621);font-weight:bold;">results</span></b>
<b class="l" style="left:538px;top:359px;color:#ff0000;"><span style="left:1.10px;transform:scaleX(0.8565);font-weight:bold;">will</span> <span style="left:23.03px;transform:scaleX(0.9010);font-weight:bold;">occur</span> <span style="left:58.91px;transform:scaleX(0.8786);font-weight:bold;">if</span> <span style="left:69.87px;transform:scaleX(0.9204);font-weight:bold;">not.</span></b>
<b class="l" style="left:38px;top:441px;"><span style="left:1.10px;transform:scaleX(0.8514);">Save</span> <span style="left:29.35px;transform:scaleX(0.8163);">Settings</span></b>
<b class="l" style="left:163px;top:430px;"><span style="left:1.10px;transform:scaleX(0.8238);">Remove</span> <span style="left:43.97px;transform:scaleX(0.8629);">NT</span> <span style="left:61.91px;transform:scaleX(0.8279);">Service</span></b>
<b class="l" style="left:182px;top:451px;color:#fff;"><span style="left:1.10px;transform:scaleX(0.8280);">Stop</span> <span style="left:26.26px;transform:scaleX(0.8359);">Service</span></b>
<b class="l" style="left:181px;top:450px;color:#808080;"><span style="left:1.10px;transform:scaleX(0.8280);">Stop</span> <span style="left:26.26px;transform:scaleX(0.8359);">Service</span></b>
<b class="l" style="left:285px;top:434px;"><span style="left:1.10px;transform:scaleX(0.8278);">Running</span> <span style="left:44.19px;transform:scaleX(0.8029);">as</span> <span style="left:58.23px;transform:scaleX(0.8275);">service</span></b>
<b class="l" style="left:460px;top:433px;color:#800000;"><span style="left:1.10px;transform:scaleX(0.9341);font-weight:bold;">Note</span> <span style="left:32.08px;transform:scaleX(0.9235);font-weight:bold;">-</span> <span style="left:40.08px;transform:scaleX(0.9322);font-weight:bold;">You</span> <span style="left:66.06px;transform:scaleX(0.9498);font-weight:bold;">MUST</span> <span style="left:105.04px;transform:scaleX(0.9043);font-weight:bold;">set</span> <span style="left:126.03px;transform:scaleX(0.8515);font-weight:bold;">your</span> <span style="left:154.01px;transform:scaleX(0.9109);font-weight:bold;">local</span></b>
<b class="l" style="left:441px;top:446px;color:#800000;"><span style="left:1.10px;transform:scaleX(0.8734);font-weight:bold;">domain(s)</span> <span style="left:59.37px;transform:scaleX(0.8696);font-weight:bold;">in</span> <span style="left:73.43px;transform:scaleX(0.9273);font-weight:bold;">the</span> <span style="left:95.53px;transform:scaleX(0.9267);font-weight:bold;">Black</span> <span style="left:131.70px;transform:scaleX(1.3000);font-weight:bold;">/</span> <span style="left:140.74px;transform:scaleX(0.9370);font-weight:bold;">White</span> <span style="left:177.91px;transform:scaleX(0.8693);font-weight:bold;">List</span> <span style="left:202.02px;transform:scaleX(0.9273);font-weight:bold;">tab</span></b>
<b class="l" style="left:6px;top:479px;"><span style="left:1.10px;transform:scaleX(0.7828);">Current</span> <span style="left:38.03px;transform:scaleX(0.8283);">Inbound</span> <span style="left:79.94px;transform:scaleX(0.8154);">Connections:</span> <span style="left:144.81px;transform:scaleX(0.8282);">2</span></b>
<b class="l" style="left:6px;top:495px;"><span style="left:1.10px;transform:scaleX(0.8728);">Total</span> <span style="left:28.06px;transform:scaleX(0.8288);">Inbound</span> <span style="left:70.01px;transform:scaleX(0.8153);">Connections</span> <span style="left:131.92px;transform:scaleX(0.8247);">Served:</span> <span style="left:171.87px;transform:scaleX(0.8287);">22127486</span></b>
<b class="l" style="left:6px;top:511px;"><span style="left:1.10px;transform:scaleX(0.7848);">Current</span> <span style="left:38.12px;transform:scaleX(0.8236);">Outbound</span> <span style="left:88.16px;transform:scaleX(0.8176);">Connections:</span> <span style="left:153.20px;transform:scaleX(0.8304);">0</span></b>
<b class="l" style="left:261px;top:479px;"><span style="left:1.10px;transform:scaleX(0.7986);">EMails</span> <span style="left:35.27px;transform:scaleX(0.8180);">forwarded:</span> <span style="left:88.52px;transform:scaleX(0.8339);">657319</span></b>
<b class="l" style="left:261px;top:495px;"><span style="left:1.10px;transform:scaleX(0.7954);">EMails</span> <span style="left:35.13px;transform:scaleX(0.8474);">blocked:</span> <span style="left:79.16px;transform:scaleX(0.8305);">19241863</span></b>
<b class="l" style="left:261px;top:511px;"><span style="left:1.10px;transform:scaleX(0.7966);">EMails</span> <span style="left:35.18px;transform:scaleX(0.8032);">Attempts:</span> <span style="left:82.29px;transform:scaleX(0.8318);">17007962</span></b>
<b class="l" style="left:5px;top:531px;color:#000080;"><span style="left:1.10px;transform:scaleX(0.7934);">Spam</span> <span style="left:31.04px;transform:scaleX(0.7599);">Filter</span> <span style="left:55.98px;transform:scaleX(0.8504);">v.4.0.0.763</span> <span style="left:112.86px;transform:scaleX(0.8140);">(REGISTERED)</span> <span style="left:191.70px;transform:scaleX(0.7995);">by</span> <span style="left:205.67px;transform:scaleX(0.8234);">LogSat</span> <span style="left:242.59px;transform:scaleX(0.8170);">Software</span></b>
<b class="l" style="left:3px;top:550px;"><span style="left:1.09px;transform:scaleX(0.9060);font-size:11.6px;">Running</span></b>
<b class="l" style="left:45px;top:550px;"><span style="left:1.67px;transform:scaleX(0.8900);font-size:11.6px;">since:</span></b>
<b class="l" style="left:76px;top:550px;"><span style="left:1.66px;transform:scaleX(0.9554);font-size:11.6px;">12/23/2007</span></b>
<b class="l" style="left:135px;top:550px;"><span style="left:1.92px;transform:scaleX(0.9695);font-size:11.6px;">9:07:10</span></b>
<b class="l" style="left:176px;top:550px;"><span style="left:1.69px;transform:scaleX(0.8916);font-size:11.6px;">AM</span></b>
<b class="l" style="left:502px;top:519px;"><span style="left:1.10px;transform:scaleX(0.8214);">Latest</span> <span style="left:33.20px;transform:scaleX(0.8034);">build</span> <span style="left:58.27px;transform:scaleX(0.8209);">available</span> <span style="left:103.41px;transform:scaleX(0.7934);">for</span> <span style="left:118.45px;transform:scaleX(0.8292);">download:</span></b>
<b class="l" style="left:611px;top:531px;color:#800000;"><span style="left:1.10px;transform:scaleX(0.9908);">v.</span> <span style="left:13.18px;transform:scaleX(0.8358);">3.5.4.718</span></b>
<b class="l" style="left:631px;top:485px;"><span style="left:1.10px;transform:scaleX(0.8105);">Help</span> <span style="left:25.73px;transform:scaleX(0.8181);">!</span></b>
</div></body></html>
